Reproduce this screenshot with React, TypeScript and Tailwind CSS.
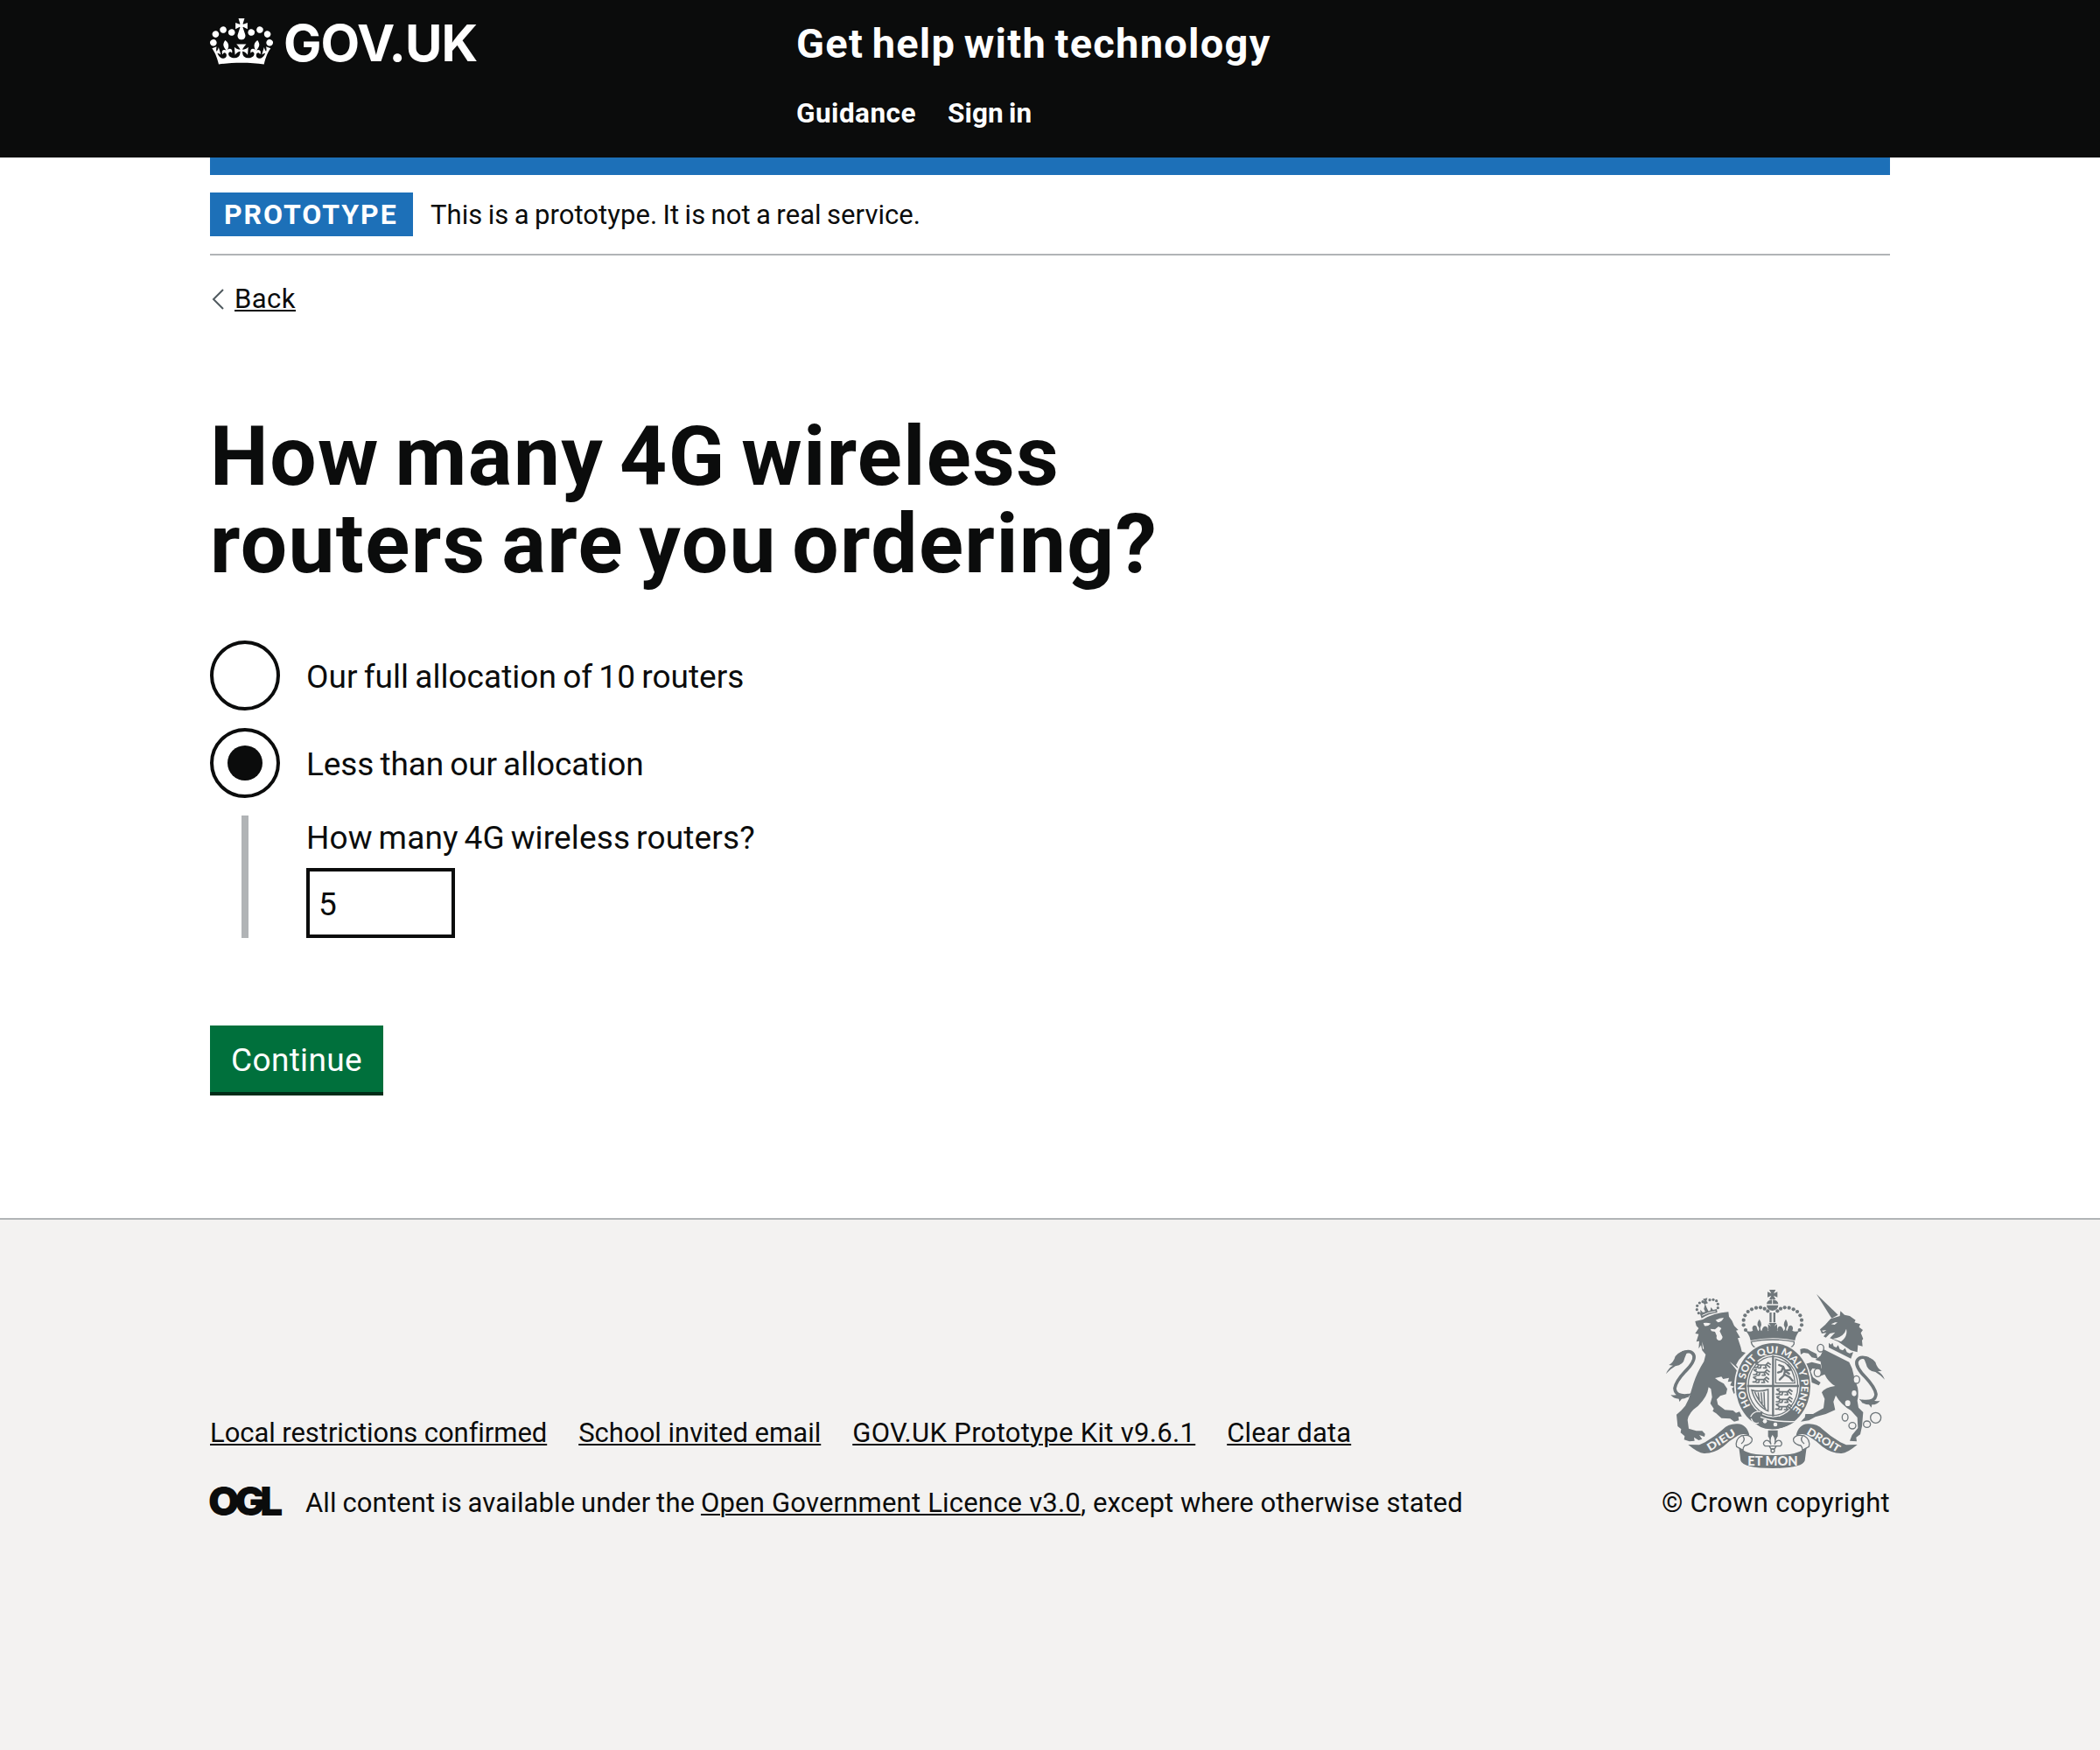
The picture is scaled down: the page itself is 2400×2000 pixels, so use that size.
import type { ReactNode } from 'react'

const GREY = '#6f777b'
const PAPER = '#f3f2f1'

function Crown() {
  return (
    <svg className="h-[53px] w-[72px]" viewBox="0 0 132 97" fill="currentColor" aria-hidden="true">
      <path
        fillRule="evenodd"
        d="M25 30.2c3.5 1.5 7.7-.2 9.1-3.7 1.5-3.6-.2-7.8-3.9-9.2-3.6-1.4-7.6.3-9.1 3.9-1.4 3.5.3 7.5 3.9 9zM9 39.5c3.6 1.5 7.8-.2 9.2-3.7 1.5-3.6-.2-7.8-3.9-9.1-3.6-1.5-7.6.2-9.1 3.8-1.4 3.5.3 7.5 3.8 9zM4.4 57.2c3.5 1.5 7.7-.2 9.1-3.8 1.5-3.6-.2-7.7-3.9-9.1-3.5-1.5-7.6.3-9.1 3.8-1.4 3.5.3 7.6 3.9 9.1zm38.3-21.4c3.5 1.5 7.7-.2 9.1-3.8 1.5-3.6-.2-7.7-3.9-9.1-3.6-1.5-7.6.3-9.1 3.8-1.3 3.6.4 7.7 3.9 9.1zm64.4-5.6c-3.6 1.5-7.8-.2-9.1-3.7-1.5-3.6.2-7.8 3.8-9.2 3.6-1.4 7.7.3 9.2 3.9 1.3 3.5-.4 7.5-3.9 9zm15.9 9.3c-3.6 1.5-7.7-.2-9.1-3.7-1.5-3.6.2-7.8 3.7-9.1 3.6-1.5 7.7.2 9.2 3.8 1.5 3.5-.3 7.5-3.8 9zm4.7 17.7c-3.6 1.5-7.8-.2-9.2-3.8-1.5-3.6.2-7.7 3.9-9.1 3.6-1.5 7.7.3 9.2 3.8 1.3 3.5-.4 7.6-3.9 9.1zM89.3 35.8c-3.6 1.5-7.8-.2-9.2-3.8-1.4-3.6.2-7.7 3.9-9.1 3.6-1.5 7.7.3 9.2 3.8 1.4 3.6-.3 7.7-3.9 9.1zM69.7 17.7l8.9 4.7V9.3l-8.9 2.8c-.2-.3-.5-.6-.9-.9L72.4 0H59.6l3.5 11.2c-.3.3-.6.5-.9.9l-8.8-2.8v13.1l8.8-4.7c.3.3.6.7.9.9l-5 15.4v.1c-.2.8-.4 1.6-.4 2.4 0 4.1 3.1 7.5 7 8.1h.2c.3 0 .7.1 1 .1.4 0 .7 0 1-.1h.2c4-.6 7.1-4.1 7.1-8.1 0-.8-.1-1.7-.4-2.4V34l-5.1-15.4c.4-.2.7-.6 1-.9zM66 92.8c16.9 0 32.8 1.1 47.1 3.2 4-16.9 8.9-26.7 14-33.5l-9.6-3.4c1 4.9 1.1 7.2 0 10.2-1.5-1.4-3-4.3-4.2-8.7L108.6 76c2.8-2 5-3.2 7.5-3.3-4.4 9.4-10 11.9-13.6 11.2-4.3-.8-6.3-4.6-5.6-7.9 1-4.7 5.7-5.9 8-.5 4.3-8.7-3-11.4-7.6-8.8 7.1-7.2 7.9-13.5 2.1-21.1-8 6.1-8.1 12.3-4.5 20.8-4.7-5.4-12.1-2.5-9.5 6.2 3.4-5.2 7.9-2 7.2 3.1-.6 4.3-6.4 7.8-13.5 7.2-10.3-.9-10.9-8-11.2-13.8 2.5-.5 7.1 1.8 11 7.3L80.2 60c-4.1 4.4-8 5.3-12.3 5.4 1.4-4.4 8-11.6 8-11.6H55.5s6.4 7.2 7.9 11.6c-4.2-.1-8-1-12.3-5.4l1.4 16.4c3.9-5.5 8.5-7.7 10.9-7.3-.3 5.8-.9 12.8-11.1 13.8-7.2.6-12.9-2.9-13.5-7.2-.7-5 3.8-8.3 7.1-3.1 2.7-8.7-4.6-11.6-9.4-6.2 3.7-8.5 3.6-14.7-4.6-20.8-5.8 7.6-5 13.9 2.2 21.1-4.7-2.6-11.9.1-7.7 8.8 2.3-5.5 7.1-4.2 8.1.5.7 3.3-1.3 7.1-5.7 7.9-3.5.7-9-1.8-13.5-11.2 2.5.1 4.7 1.3 7.5 3.3l-4.7-15.4c-1.2 4.4-2.7 7.2-4.3 8.7-1.1-3-.9-5.3 0-10.2l-9.5 3.4c5 6.9 9.9 16.7 14 33.5 14.8-2.1 30.8-3.2 47.7-3.2z"
      />
    </svg>
  )
}

const CROWN_PEARLS = [
  [345, 210], [338, 193], [338, 176], [343, 160], [353, 147], [366, 139], [381, 134], [396, 133], [410, 137], [421, 145],
]
const LION_CROWN_PEARLS = [
  [184, 152], [178, 140], [179, 127], [187, 117], [198, 113], [222, 107], [234, 106], [245, 110], [250, 121], [250, 134],
]
const CHAIN = [
  [602, 272, 11, 13], [592, 356, 12, 14], [725, 380, 11, 13], [686, 509, 10, 13], [711, 538, 12, 11], [761, 533, 12, 11], [791, 511, 18, 18],
]

function Ribbon() {
  return (
    <g>
      <path d="M148 603L186 604L206 595Q240 575 266 551Q288 530 318 532Q350 534 358 572Q336 562 318 572Q290 588 268 610Q236 634 202 633Q182 632 148 603Z" />
      <path d="M354 572Q372 580 366 592Q358 604 342 606Q336 612 336 622L314 610Q308 586 330 573Q344 570 354 572Z" fill={PAPER} stroke={GREY} strokeWidth="4" />
      <path d="M336 574Q346 588 330 600" fill="none" stroke={GREY} strokeWidth="4" />
    </g>
  )
}

function Tail() {
  return (
    <g>
      <path d="M150 434Q104 440 102 410Q106 386 138 352Q172 318 168 298Q160 276 128 288" fill="none" stroke={GREY} strokeWidth="11" />
      <path d="M72 360Q80 340 96 332L82 330Q98 322 104 300Q122 278 152 280Q140 290 136 306Q132 330 104 334Q84 346 72 360Z" />
      <path d="M88 432Q104 436 112 430L126 436L160 426Q146 446 126 446L118 456L116 446Q98 446 88 432Z" />
    </g>
  )
}

function Passant({ x, y }: { x: number; y: number }) {
  return (
    <g transform={`translate(${x} ${y})`} fill="none" stroke={GREY} strokeWidth="5" strokeLinecap="round" strokeLinejoin="round">
      <path d="M8 6L18 12H42L50 4M18 12L12 20L4 20M26 12L24 22L16 22M40 12L44 22L34 22M50 4L58 10M46 12L56 20" />
      <path d="M6 4L14 2" />
    </g>
  )
}

function RoyalArms() {
  return (
    <svg className="h-[204px] w-[250px] overflow-visible" viewBox="72 72 750 612" fill={GREY} aria-hidden="true">
      {/* central crown */}
      <path d="M426 72H448L441 85L454 79V98L441 92L448 105H426L433 92L420 98V79L433 85Z" />
      <path d="M417 121Q418 107 437 106Q456 107 457 121ZM417 125H457Q456 141 437 144Q418 141 417 125Z" />
      <path d="M437 104V122" stroke={PAPER} strokeWidth="3" />
      <path d="M427 150H434V184H427ZM440 150H447V184H440Z" />
      {CROWN_PEARLS.map(([x, y]) => (
        <g key={`${x}-${y}`}>
          <circle cx={x} cy={y} r="6.3" />
          <circle cx={875 - x} cy={y} r="6.3" />
        </g>
      ))}
      <path d="M345 212Q362 218 370 212Q364 198 374 194Q384 194 384 204L388 214Q396 206 386 194Q384 184 392 173Q401 186 398 196Q392 208 400 214Q404 194 416 198Q424 204 420 214L432 206L422 212V190L432 198L424 186H451L443 198L453 190V212L443 206L455 214Q451 204 459 198Q471 194 475 214Q484 206 477 196Q474 186 483 173Q491 186 489 196Q480 208 487 214L491 204Q491 194 501 194Q511 198 505 212Q514 218 530 212Q518 226 514 246Q438 230 362 246Q358 226 345 212Z" />
      <path d="M364 250Q437 236 511 250V258Q508 266 498 270Q437 254 378 270Q366 264 364 250Z" fill={PAPER} stroke={GREY} strokeWidth="4" />

      {/* lion */}
      <Tail />
      <path d="M172 180L198 174Q235 152 286 148L288 164L298 178L306 196L320 210L312 212L326 236L318 238L328 268L332 284L345 288L322 312L312 330L330 350L343 378L348 400L340 418L328 428L316 424L304 428L298 410L306 404L292 400L298 386L284 388L288 374L268 378L262 370L240 375L252 384L270 394L282 412L278 430L258 436L246 448L250 466L274 484L302 486L312 494L324 490L332 506L320 508L322 520L306 524L292 514L262 512L244 496L232 488L236 480L224 462L230 440L226 412L218 406Q214 440 182 470Q150 492 146 518L150 548L176 556L196 556L206 566L204 576L186 570L196 584L184 588L168 578L170 590L152 592L134 586L136 574L122 562L124 550L112 540L110 520L108 500L124 486L138 470L150 446L158 420L166 394Q178 356 202 318L208 294L196 280L192 262L184 274L186 248L176 250L184 224L172 222L184 204L176 196Z" />
      <path d="M200 186Q214 184 226 188Q216 198 204 196ZM242 176Q256 168 270 168Q264 182 250 184ZM224 206L240 208L252 198L262 204L256 214L266 234Q264 246 254 246Q242 242 246 230L240 216L228 214ZM290 318L330 352L342 378L332 366L316 350ZM196 250L202 274L198 276Z" fill={PAPER} />
      <path d="M188 152L246 138L248 150Q218 154 194 170Z" />
      <path d="M196 160Q218 148 242 146" fill="none" stroke={PAPER} strokeWidth="3" />
      <path d="M198 104L214 100L211 110L216 118L204 122L196 114L204 111ZM206 120L212 134L218 146L208 150L202 138ZM190 140L200 152H190ZM226 132L236 144H224Z" />
      {LION_CROWN_PEARLS.map(([x, y]) => (
        <circle key={`${x}-${y}`} cx={x} cy={y} r="4.8" />
      ))}

      {/* unicorn */}
      <g transform="translate(894 20) scale(-1 1)">
        <Tail />
      </g>
      <path d="M588 87L662 158L640 170Z" />
      <path d="M600 208L618 192L636 172L668 162L670 145L684 158L702 162L722 176L718 184L738 190L734 200L747 210L740 220L748 240L744 246L746 266L730 262L728 286L706 280L662 250L634 238L652 218L634 222L620 236L612 232L622 220L606 222Z" />
      <path d="M638 190L652 184L660 184L650 192ZM644 240Q682 236 690 206Q696 232 672 250ZM606 212L622 210L612 217Z" fill={PAPER} />
      <path d="M626 246L724 292L708 322L698 316L622 274Z" fill={PAPER} />
      <path d="M630 254L637 260L643 254L647 266L656 270L662 262L668 276L678 280L686 272L692 286L701 290L714 286L706 308L630 270Z" />
      <path d="M612 276L700 320Q712 340 716 366L724 392Q736 420 728 452L732 476L748 492L744 540L738 568L724 578L726 592L702 590L710 570L730 546L728 510L706 486Q672 466 654 434L646 456L652 484L620 498L584 508L562 520L534 524L548 510L550 498L576 498L612 478L616 446L606 424Q618 406 652 402Q628 388 616 362L600 368L578 352L588 340L606 342L602 318L584 312L602 298Z" />
      <path d="M532 276Q552 268 568 282L588 292L592 308L572 304L560 290L544 288L534 294ZM546 328L572 320L602 328L606 346L574 342L568 352L576 372L602 390L596 400L566 388L550 362L554 344L544 346Z" />
      {CHAIN.map(([x, y, rx, ry]) => (
        <ellipse key={`${x}-${y}`} cx={x} cy={y} rx={rx} ry={ry} fill={PAPER} stroke={GREY} strokeWidth="4" />
      ))}
      <ellipse cx="717" cy="427" rx="8" ry="10" fill={PAPER} />
      <ellipse cx="695" cy="461" rx="9" ry="10" fill={PAPER} />

      {/* garter and shield */}
      <ellipse cx="439" cy="402" rx="133" ry="151" fill={PAPER} />
      <ellipse cx="439" cy="402" rx="128" ry="147" />
      <ellipse cx="439" cy="402" rx="91" ry="107" fill={PAPER} />
      <ellipse cx="439" cy="402" rx="85" ry="101" fill="none" stroke={GREY} strokeWidth="4" />
      <path d="M439 298V506M350 402H528" stroke={GREY} strokeWidth="7" />
      <Passant x={372} y={318} />
      <Passant x={368} y={343} />
      <Passant x={366} y={368} />
      <Passant x={446} y={410} />
      <Passant x={446} y={436} />
      <Passant x={444} y={461} />
      <path d="M448 310V392H514Q512 344 480 322L448 310Z" fill="none" stroke={GREY} strokeWidth="4" />
      <path d="M460 330L474 336L480 350L500 346M474 336L468 352L456 356M480 350L476 366L462 380M478 362L496 372L506 384M490 330L498 340M480 350L494 360" fill="none" stroke={GREY} strokeWidth="7" strokeLinecap="round" />
      <path d="M366 416Q390 424 422 414V488Q380 470 366 416ZM376 422Q388 452 414 480M388 424L392 450M398 424L402 464M408 422L410 474" fill="none" stroke={GREY} strokeWidth="4.5" />
      <path d="M368 502Q384 480 404 492L398 510L512 526Q470 552 430 550Q392 548 382 530Q362 530 368 502Z" />
      <path d="M362 508Q372 486 396 490M364 514Q372 536 390 528M396 508Q440 526 512 524" fill="none" stroke={PAPER} strokeWidth="4" />
      <circle cx="411" cy="523" r="7" fill={PAPER} />
      <circle cx="447" cy="534" r="7" fill={PAPER} />
      <path id="garter-path" d="M362 470A97 112 0 1 1 510 478" fill="none" />
      <text className="font-['Lato'] font-black" fill={PAPER} fontSize="34">
        <textPath href="#garter-path" textLength="490" lengthAdjust="spacingAndGlyphs">
          HON SOIT QUI MAL Y PENSE
        </textPath>
      </text>

      {/* motto scroll */}
      <Ribbon />
      <g transform="translate(876 0) scale(-1 1)">
        <Ribbon />
      </g>
      <path d="M322 612Q345 632 380 636Q438 642 496 636Q530 632 554 612L548 658Q540 684 438 684Q336 684 328 658Z" />
      <path d="M422 554H455V574L447 590H430L422 574Z" />
      <path d="M437 566Q452 584 444 602Q452 584 464 590Q474 600 464 608H412Q400 600 412 590Q424 584 432 602Q424 584 437 566ZM426 608H450L444 618H432Z" fill={PAPER} stroke={GREY} strokeWidth="4" />
      <circle cx="438" cy="624" r="6" fill={PAPER} stroke={GREY} strokeWidth="4" />
      <g className="font-['Lato'] font-black" fill={PAPER} textAnchor="middle">
        <text fontSize="36" transform="translate(268 598) rotate(-32)" textLength="108" lengthAdjust="spacingAndGlyphs">DIEU</text>
        <text fontSize="36" transform="translate(606 598) rotate(31)" textLength="126" lengthAdjust="spacingAndGlyphs">DROIT</text>
        <text fontSize="45" x="438" y="676" textLength="172" lengthAdjust="spacingAndGlyphs">ET MON</text>
      </g>
    </svg>
  )
}

function Link({ className, children }: { className: string; children: ReactNode }) {
  return (
    <a href="#" className={`whitespace-nowrap underline decoration-2 underline-offset-[2px] ${className}`}>
      {children}
    </a>
  )
}

function Radio({ checked, className, label }: { checked?: boolean; className: string; label: string }) {
  return (
    <label className="flex h-20 items-center gap-[30px]">
      <span className="flex size-20 items-center justify-center rounded-full border-4 border-[#0b0c0c]">
        {checked && <span className="size-10 rounded-full bg-[#0b0c0c]" />}
      </span>
      <span className={`pt-[4px] text-[37px] leading-[50px] whitespace-nowrap ${className}`}>{label}</span>
    </label>
  )
}

export default function App() {
  return (
    <div className="min-h-[2000px] bg-white font-['Roboto',sans-serif] text-[31px] leading-[50px] text-[#0b0c0c] antialiased">
      <header className="h-[180px] bg-[#0b0c0c] text-white">
        <div className="mx-auto flex w-[1920px]">
          <a href="#" className="flex w-[670px] gap-3 pt-[19px]">
            <span className="pt-[2px]">
              <Crown />
            </span>
            <span className="font-['Inter'] text-[58px] leading-[60px] font-bold tracking-[-1px]">GOV.UK</span>
          </a>
          <div className="pt-[26px] font-bold">
            <div className="text-[47px] leading-[48px] tracking-[1.26px] whitespace-nowrap [word-spacing:-3.4px]">Get help with technology</div>
            <nav className="mt-9 flex gap-9 text-[31.5px] leading-[40px]">
              <a href="#" className="tracking-[0.48px]">Guidance</a>
              <a href="#" className="tracking-[0.1px] [word-spacing:-1.6px]">Sign in</a>
            </nav>
          </div>
        </div>
      </header>

      <div className="mx-auto w-[1920px]">
        <div className="h-5 bg-[#1d70b8]" />
        <div className="flex h-[92px] items-center gap-5 border-b-2 border-[#b1b4b6]">
          <strong className="h-[50px] w-[232px] bg-[#1d70b8] pl-4 text-[32px] font-bold tracking-[1.95px] text-white">PROTOTYPE</strong>
          <span className="pt-[2px] tracking-[0.06px] whitespace-nowrap [word-spacing:-1.4px]">This is a prototype. It is not a real service.</span>
        </div>

        <div className="mt-6 flex h-[50px] items-center">
          <svg className="mt-[2px] mr-[12px] ml-[2px] h-[24px] w-[14px]" viewBox="0 0 14 24" fill="none" stroke="#505a5f" strokeWidth="2">
            <path d="M13 1L2 12L13 23" />
          </svg>
          <span className="pt-[2px]">
            <Link className="tracking-[0.47px]">Back</Link>
          </span>
        </div>

        <main className="pt-[106px]">
          <h1 className="text-[94.5px] leading-[100px] font-bold whitespace-nowrap">
            <span className="block tracking-[1.45px] [word-spacing:-7.2px]">How many 4G wireless</span>
            <span className="block tracking-[1.45px] [word-spacing:-7.5px]">routers are you ordering?</span>
          </h1>

          <div className="mt-[60px] flex flex-col gap-5">
            <Radio className="tracking-[0.03px] [word-spacing:-2px]" label="Our full allocation of 10 routers" />
            <Radio checked className="tracking-[-0.09px] [word-spacing:-2px]" label="Less than our allocation" />
            <div className="ml-9 h-[140px] border-l-8 border-[#b1b4b6] pl-[66px] text-[37px]">
              <div className="pt-px leading-[50px] tracking-[0.15px] [word-spacing:-2.5px]">How many 4G wireless routers?</div>
              <div className="mt-[9px] h-20 w-[170px] border-4 border-[#0b0c0c] px-[10px] pt-[2px] leading-[72px]">5</div>
            </div>
          </div>

          <button className="mt-[100px] flex h-[76px] w-[198px] items-center justify-center bg-[#00703c] pt-[4px] text-[37px] tracking-[0.35px] text-white shadow-[0_4px_0_#002d18]">
            Continue
          </button>
        </main>
      </div>

      <footer className="mt-36 h-[608px] border-t-2 border-[#b1b4b6] bg-[#f3f2f1]">
        <div className="mx-auto flex w-[1920px] justify-between pt-20">
          <div className="pt-[139px]">
            <div className="flex gap-9">
              <Link className="tracking-[-0.06px]">Local restrictions confirmed</Link>
              <Link className="tracking-[0.01px]">School invited email</Link>
              <Link className="tracking-[0.31px]">GOV.UK Prototype Kit v9.6.1</Link>
              <Link className="tracking-[0.14px]">Clear data</Link>
            </div>
            <div className="mt-[30px] flex">
              <span className="-mt-px -ml-[2px] w-[111px] font-['Inter'] text-[46px] leading-[46px] font-black tracking-[-5.5px]">OGL</span>
              <p className="whitespace-nowrap">
                <span className="tracking-[0.12px] [word-spacing:-1px]">All content is available under the </span>
                <Link className="tracking-[0.2px]">Open Government Licence v3.0</Link>
                <span className="tracking-[0.08px]">, except where otherwise stated</span>
              </p>
            </div>
          </div>
          <div className="flex flex-col items-end">
            <div className="h-[204px] pr-[6px]">
              <RoyalArms />
            </div>
            <span className="mt-[15px] tracking-[0.26px] whitespace-nowrap">© Crown copyright</span>
          </div>
        </div>
      </footer>
    </div>
  )
}
